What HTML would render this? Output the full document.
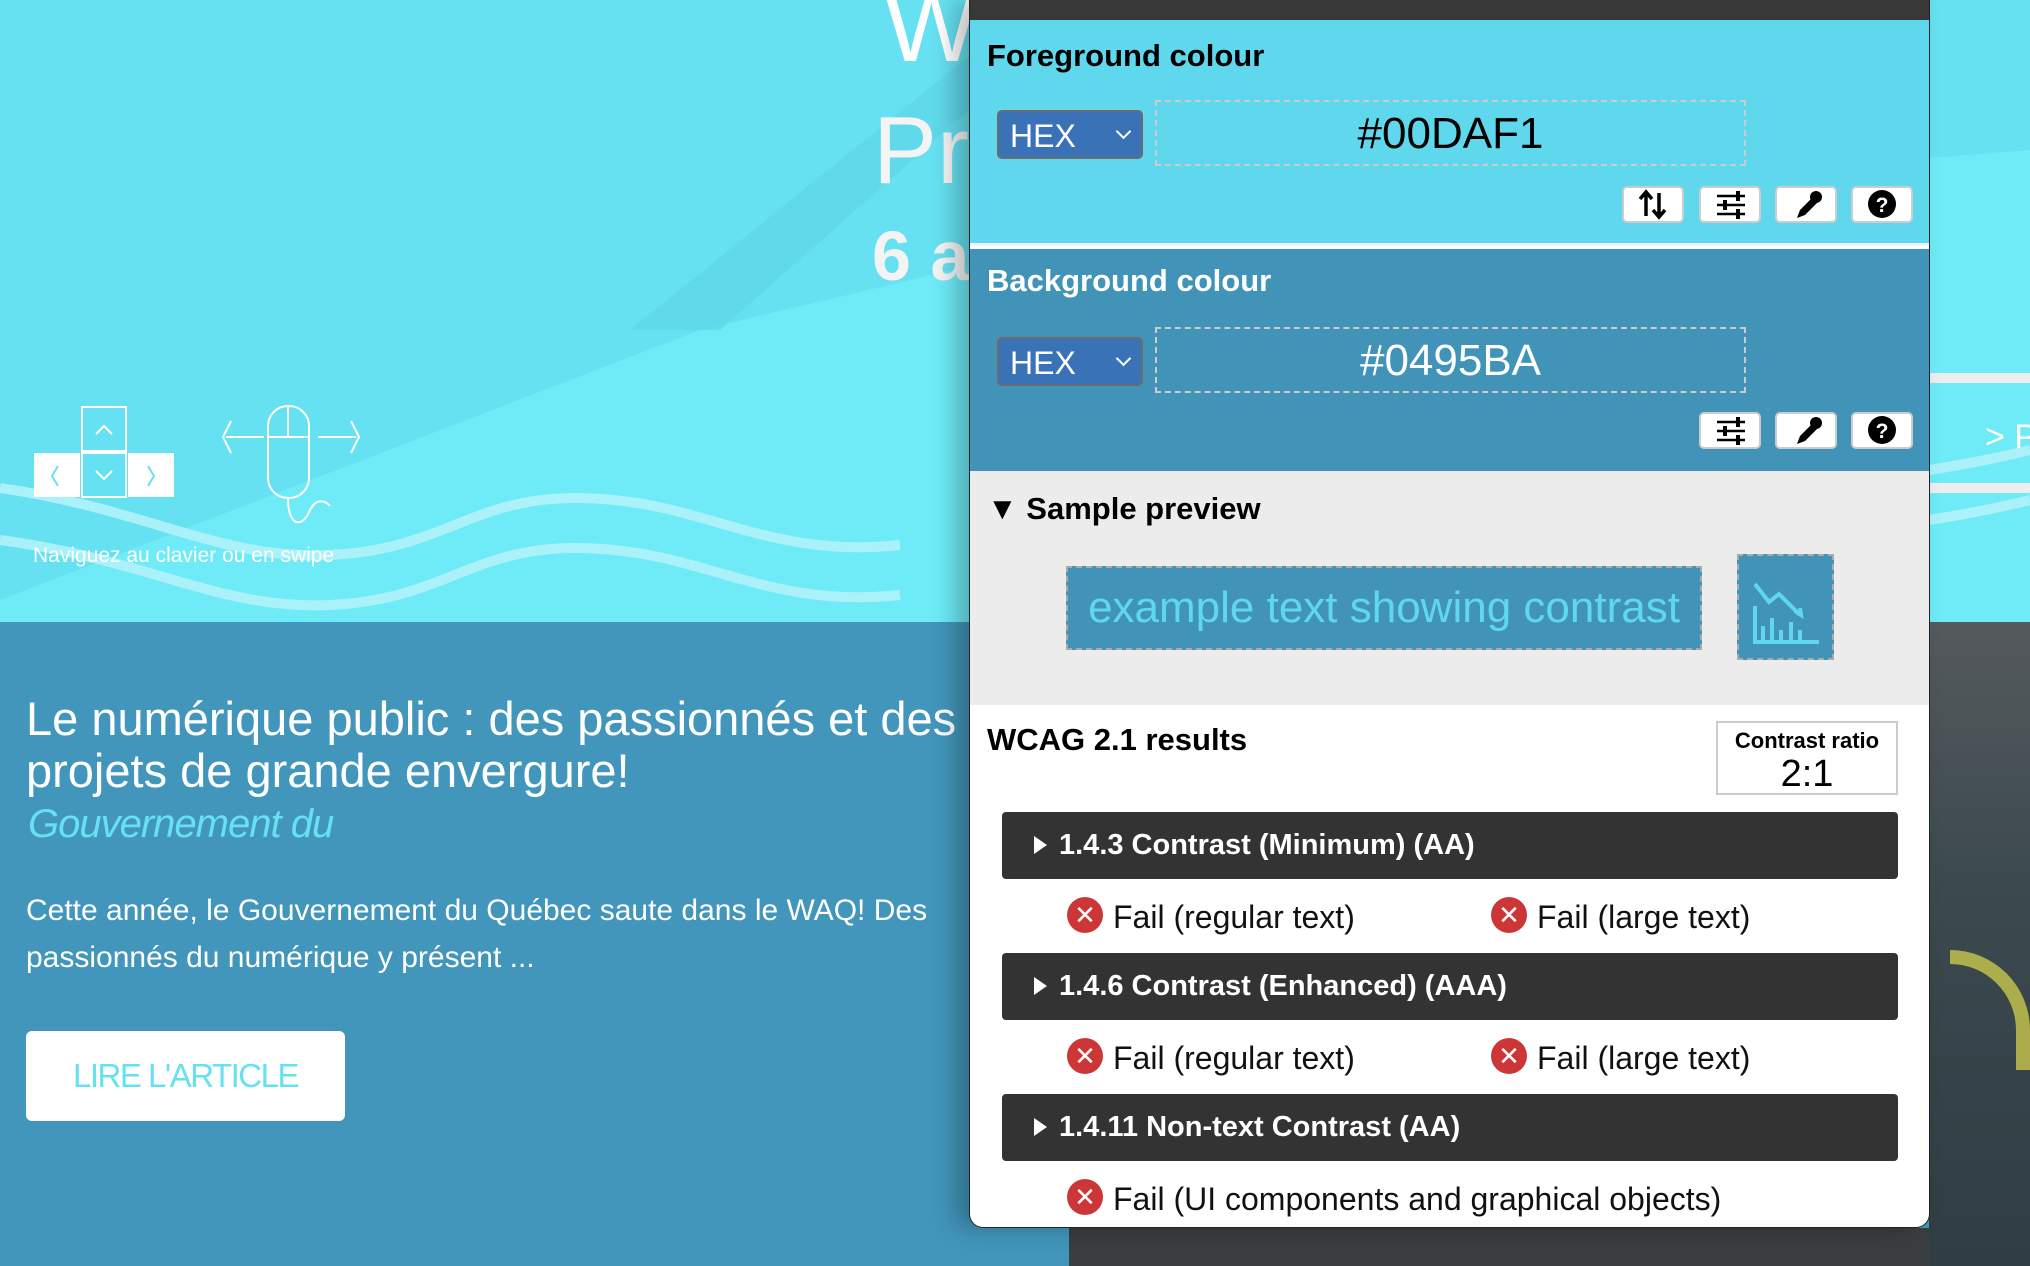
<!DOCTYPE html>
<html><head><meta charset="utf-8"><style>
*{margin:0;padding:0;box-sizing:border-box}
body{width:2030px;height:1266px;overflow:hidden;position:relative;font-family:"Liberation Sans",sans-serif;background:#4296bb}
.abs{position:absolute}
.hero{left:0;top:0;width:2030px;height:622px;background:#66e1f1;overflow:hidden}
.pn{left:969px;top:0;width:961px;height:1228px;background:#fff;border:1px solid #222;border-top:none;border-radius:0 0 14px 14px;overflow:hidden;box-shadow:-14px 0 24px rgba(0,0,0,.25)}
.ib{position:absolute;width:62px;height:37px;background:#fff;border:2px solid #ccc;border-radius:5px}
.sel{position:absolute;left:27px;width:146px;height:49px;background:#3a72b8;border:2px solid #6b6b6b;border-radius:5px;color:#fff;font-size:32px;padding:6px 0 0 11px}
.sel:after{content:"";position:absolute;right:12px;top:14px;width:9px;height:9px;border-right:2px solid #fff;border-bottom:2px solid #fff;transform:rotate(45deg)}
.inp{position:absolute;left:185px;width:591px;height:66px;border:2px dashed #ccc;text-align:center;font-size:44px;line-height:64px}
.h{position:absolute;left:17px;font-weight:bold;font-size:31px}
.bar{position:absolute;left:32px;width:896px;height:67px;background:#333;border-radius:4px;color:#fff;font-weight:bold;font-size:29px;line-height:67px;padding-left:32px}
.bar:before{content:"";display:inline-block;border-left:13px solid #fff;border-top:9px solid transparent;border-bottom:9px solid transparent;margin-right:12px}
.f{position:absolute;font-size:32px;color:#111;white-space:nowrap;line-height:40px}
.x{display:inline-block;width:36px;height:36px;border-radius:50%;background:#cd3636;color:#fff;text-align:center;line-height:36px;font-size:26px;vertical-align:top;margin-right:10px}
</style></head><body>
<div class="abs hero">
<svg width="2030" height="622" style="position:absolute;left:0;top:0">
<polygon points="0,600 700,330 1100,235 1400,200 2030,150 2030,622 0,622" fill="#6eebf7"/>
<polygon points="630,330 1100,-50 1150,-50 720,330" fill="#5ed5e8" opacity=".7"/>
<g fill="none" stroke="#b6f3fb" stroke-width="10" opacity=".85">
<path d="M0,488 C150,510 220,560 330,555 C440,550 470,500 570,498 C700,496 760,560 900,545"/>
<path d="M0,540 C150,560 220,610 330,605 C440,600 470,550 570,548 C700,546 760,610 900,595"/>
<path d="M1929,470 C1980,462 2010,455 2030,450"/><path d="M1929,520 C1980,512 2010,505 2030,500"/>
</g>
<rect x="1929" y="373" width="101" height="10" fill="#eee"/><rect x="1929" y="483" width="101" height="10" fill="#eee"/>
<g fill="none" stroke="#fff" stroke-width="2">
<rect x="82" y="407" width="44" height="44"/><rect x="82" y="453" width="44" height="44"/>
<path d="M96,434 l8,-8 l8,8 M96,471 l8,8 l8,-8"/>
<path d="M231,421 l-8,16 l8,16 M226,437 h38 M318,437 h38 M351,421 l8,16 l-8,16"/>
<rect x="268" y="406" width="41" height="92" rx="20"/><path d="M268,437 h41 M288,406 v31 M288,498 c0,30 15,30 22,12 c6,-12 15,-10 20,-4"/>
</g>
<rect x="34" y="453" width="46" height="44" fill="#fff"/><rect x="128" y="453" width="46" height="44" fill="#fff"/>
<path d="M58,466 l-6,10 l6,10 M148,466 l6,10 l-6,10" stroke="#66e1f1" stroke-width="2" fill="none"/>
</svg>
<div class="abs" style="left:33px;top:544px;color:#fff;font-size:21px;white-space:nowrap">Naviguez au clavier ou en swipe</div>
<div class="abs" style="left:884px;top:-30px;color:#fff;font-size:100px">W</div>
<div class="abs" style="left:873px;top:96px;color:#f4f4f4;font-size:96px">Pr</div>
<div class="abs" style="left:872px;top:216px;color:#f4f4f4;font-size:70px;font-weight:bold">6 a</div>
<div class="abs" style="left:1985px;top:418px;color:#fff;font-size:34px;white-space:nowrap">&gt; P</div>
</div>
<div class="abs" style="left:1929px;top:622px;width:101px;height:644px;background:linear-gradient(180deg,#555a5c,#3c4a50 40%,#2f3d44)"></div>
<div class="abs" style="left:1950px;top:950px;width:80px;height:120px;border:14px solid #c8c84a;border-left:none;border-bottom:none;border-radius:0 80px 0 0;opacity:.8"></div>
<div class="abs" style="left:1069px;top:1228px;width:861px;height:38px;background:#3a3e40"></div>
<div class="abs" style="left:26px;top:693px;color:#fff;font-size:47px;line-height:52px;white-space:nowrap">Le numérique public : des passionnés et des<br>projets de grande envergure!</div>
<div class="abs" style="left:28px;top:802px;color:#66e1f1;font-size:40px;font-style:italic;letter-spacing:-1px">Gouvernement du</div>
<div class="abs" style="left:26px;top:887px;color:#fff;font-size:30px;line-height:47px;white-space:nowrap">Cette année, le Gouvernement du Québec saute dans le WAQ! Des<br>passionnés du numérique y présent ...</div>
<div class="abs" style="left:26px;top:1031px;width:319px;height:90px;background:#fff;border-radius:6px;color:#66e1f1;font-size:33px;text-align:center;line-height:90px;letter-spacing:-1.5px">LIRE L'ARTICLE</div>

<div class="abs pn">
<div class="abs" style="left:0;top:0;width:961px;height:20px;background:#383838"></div>
<div class="abs" style="left:0;top:20px;width:961px;height:226px;background:#5fd8ee;border-bottom:3px solid #e8f6fa">
<div class="h" style="top:18px">Foreground colour</div>
<div class="sel" style="top:90px">HEX</div>
<div class="inp" style="top:80px">#00DAF1</div>
<div class="ib" style="left:652px;top:166px"><svg width="58" height="33"><path d="M22,28V5 M16,11l6,-7 6,7 M35,5v23 M29,22l6,7 6,-7" stroke="#000" stroke-width="3.5" fill="none"/></svg></div>
<div class="ib" style="left:729px;top:166px"><svg width="58" height="33"><path d="M16,8h28 M16,17h28 M16,26h28" stroke="#000" stroke-width="2.5"/><path d="M37,3v10 M24,12v10 M37,21v10" stroke="#000" stroke-width="4"/></svg></div>
<div class="ib" style="left:805px;top:166px"><svg width="58" height="33"><path d="M20,30 l3,-8 12,-12 5,5 -12,12z" fill="#000"/><circle cx="39" cy="9" r="6" fill="#000"/></svg></div>
<div class="ib" style="left:881px;top:166px"><svg width="58" height="33"><circle cx="29" cy="16" r="14" fill="#000"/><text x="29" y="24" font-size="21" font-weight="bold" fill="#fff" text-anchor="middle" font-family="Liberation Sans">?</text></svg></div>
</div>
<div class="abs" style="left:0;top:249px;width:961px;height:222px;background:#4193b8">
<div class="h" style="top:14px;color:#fff">Background colour</div>
<div class="sel" style="top:88px">HEX</div>
<div class="inp" style="top:78px;color:#fff">#0495BA</div>
<div class="ib" style="left:729px;top:163px"><svg width="58" height="33"><path d="M16,8h28 M16,17h28 M16,26h28" stroke="#000" stroke-width="2.5"/><path d="M37,3v10 M24,12v10 M37,21v10" stroke="#000" stroke-width="4"/></svg></div>
<div class="ib" style="left:805px;top:163px"><svg width="58" height="33"><path d="M20,30 l3,-8 12,-12 5,5 -12,12z" fill="#000"/><circle cx="39" cy="9" r="6" fill="#000"/></svg></div>
<div class="ib" style="left:881px;top:163px"><svg width="58" height="33"><circle cx="29" cy="16" r="14" fill="#000"/><text x="29" y="24" font-size="21" font-weight="bold" fill="#fff" text-anchor="middle" font-family="Liberation Sans">?</text></svg></div>
</div>
<div class="abs" style="left:0;top:471px;width:961px;height:234px;background:#ececec">
<div class="h" style="top:20px">&#9660; Sample preview</div>
<div class="abs" style="left:96px;top:95px;width:636px;height:84px;background:#4193b8;border:2px dashed #aaa;color:#5fd8ee;font-size:44px;text-align:center;line-height:80px">example text showing contrast</div>
<div class="abs" style="left:767px;top:83px;width:97px;height:106px;background:#4193b8;border:2px dashed #aaa">
<svg width="93" height="102"><g stroke="#5fd8ee" stroke-width="4" fill="none"><path d="M16,28 l14,18 10,-8 20,20"/><path d="M56,55 l6,4 -1,-7"/><path d="M16,50v34 M24,70v14 M33,62v22 M42,74v10 M52,66v18 M61,74v10 M14,86h66"/></g></svg></div>
</div>
<div class="h" style="top:722px">WCAG 2.1 results</div>
<div class="abs" style="left:746px;top:721px;width:182px;height:74px;border:2px solid #ccc;text-align:center">
<div style="font-size:22px;font-weight:bold;margin-top:5px">Contrast ratio</div><div style="font-size:38px;line-height:40px">2:1</div></div>
<div class="bar" style="top:812px">1.4.3 Contrast (Minimum) (AA)</div>
<div class="f" style="left:97px;top:897px"><span class="x">✕</span>Fail (regular text)</div>
<div class="f" style="left:521px;top:897px"><span class="x">✕</span>Fail (large text)</div>
<div class="bar" style="top:953px">1.4.6 Contrast (Enhanced) (AAA)</div>
<div class="f" style="left:97px;top:1038px"><span class="x">✕</span>Fail (regular text)</div>
<div class="f" style="left:521px;top:1038px"><span class="x">✕</span>Fail (large text)</div>
<div class="bar" style="top:1094px">1.4.11 Non-text Contrast (AA)</div>
<div class="f" style="left:97px;top:1179px"><span class="x">✕</span>Fail (UI components and graphical objects)</div>
</div>
</body></html>
